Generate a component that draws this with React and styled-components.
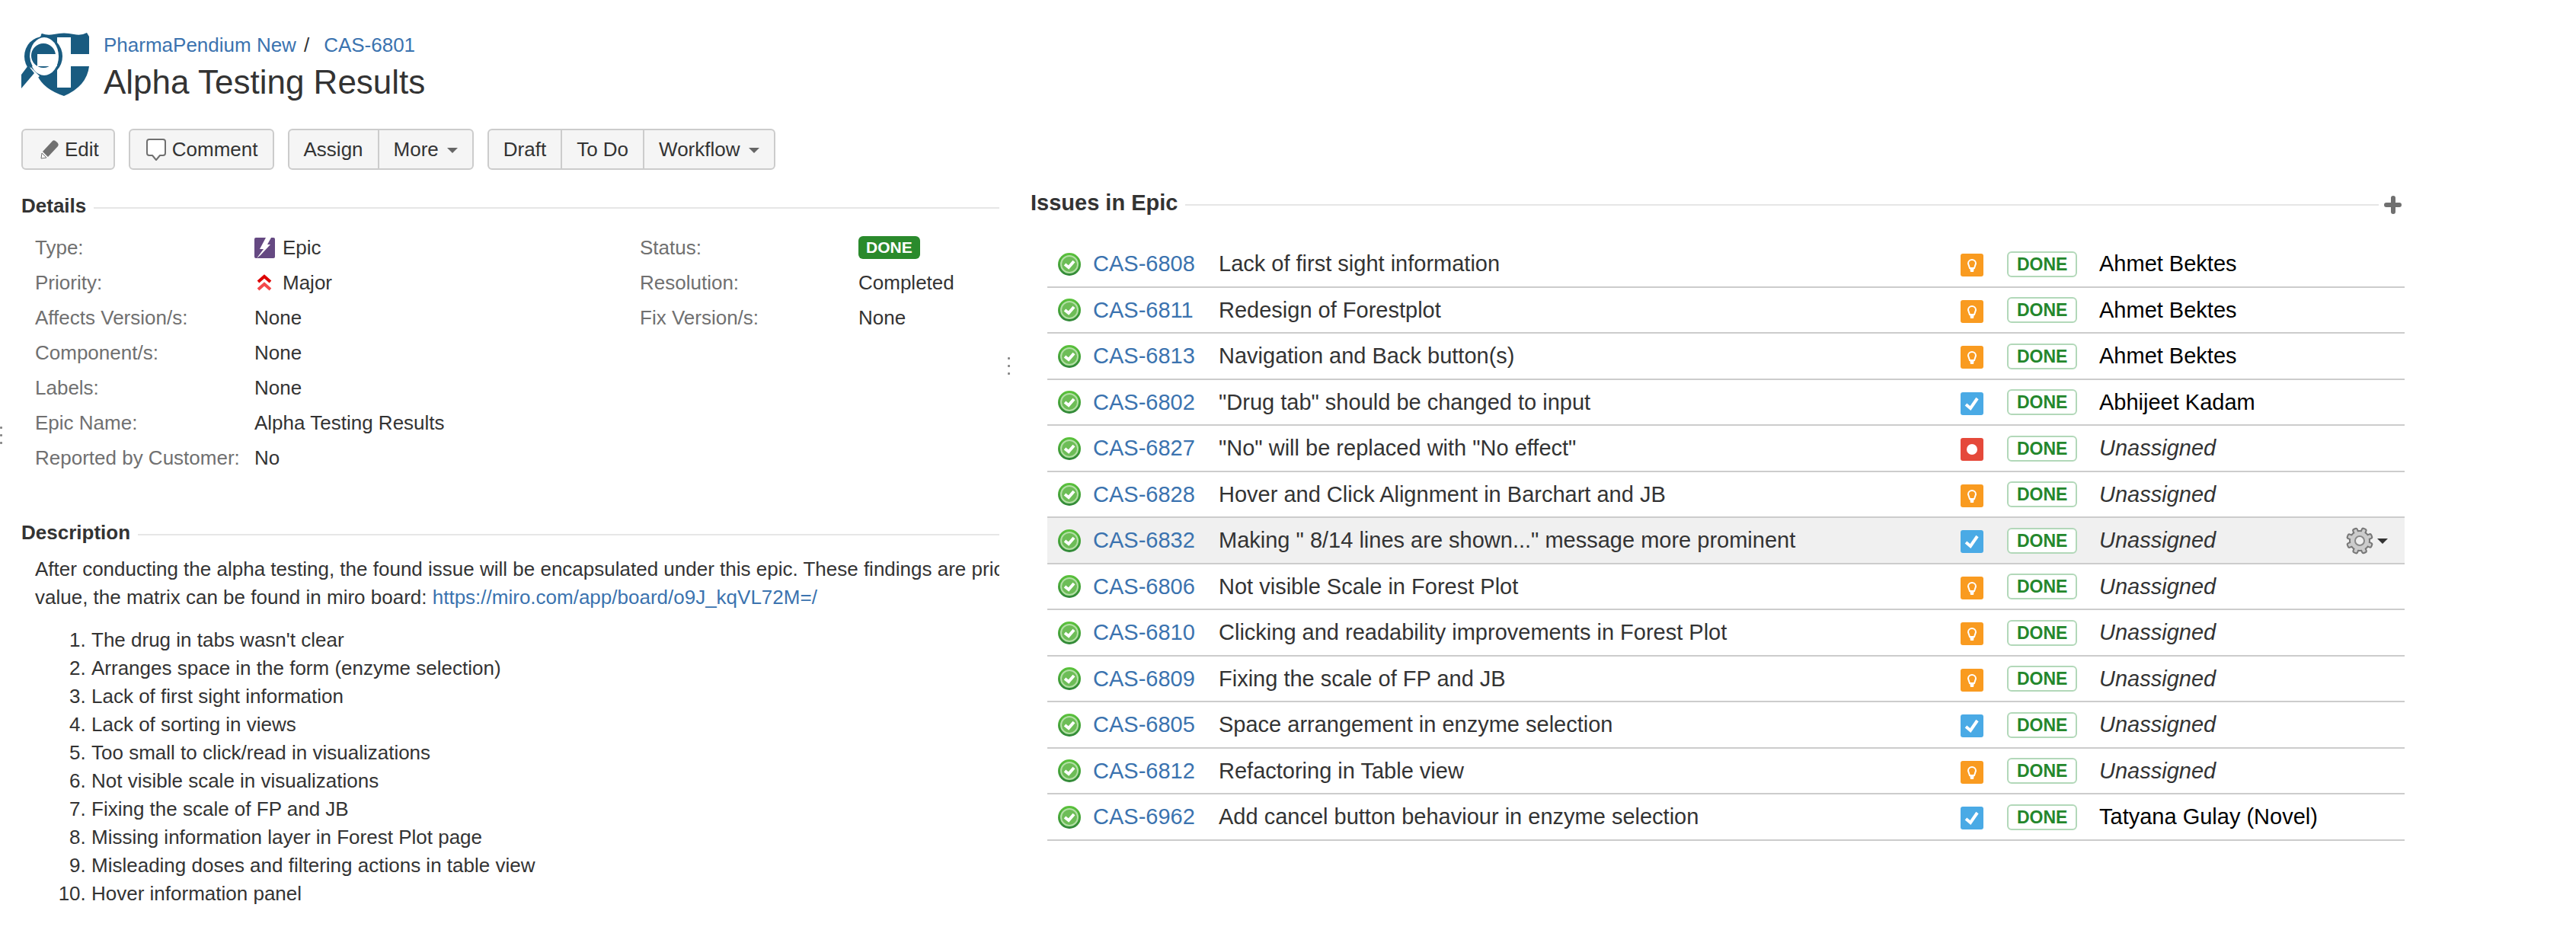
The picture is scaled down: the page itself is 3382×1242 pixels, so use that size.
import React from 'react';
import styled, { createGlobalStyle, css } from 'styled-components';

const GlobalStyle = createGlobalStyle`
  * {
    box-sizing: border-box;
  }

  body {
    margin: 0;
    background: #fff;
    color: #333;
    font-family: 'Liberation Sans', Arial, sans-serif;
    font-size: 26px;
    line-height: 37px;
  }

  svg {
    display: block;
    flex: none;
  }
`;

const Page = styled.div`
  display: flex;
  min-height: 100vh;
`;

const EdgeStrip = styled.div`
  flex: none;
  width: 28px;
  padding-top: 560px;
`;

const Content = styled.main`
  flex: 1;
  min-width: 0;
`;

const Header = styled.header`
  display: flex;
  gap: 19px;
  padding-top: 41px;
`;

const LogoBox = styled.div`
  padding-top: 2px;
`;

const Breadcrumb = styled.nav`
  display: flex;
  gap: 10px;
`;

const BreadcrumbSlash = styled.span`
  margin-right: 9px;
`;

const Link = styled.a`
  color: #3b73af;
  text-decoration: none;
`;

const Title = styled.h1`
  margin: 0;
  font-size: 44px;
  font-weight: 400;
  line-height: 60px;
`;

const Toolbar = styled.div`
  display: flex;
  flex-wrap: wrap;
  gap: 18px;
  margin: 31px 0 23px;
`;

const ButtonGroup = styled.div`
  display: flex;
`;

const ToolButton = styled.button`
  display: flex;
  align-items: center;
  gap: 6px;
  height: 54px;
  padding: 0 19px;
  border: 2px solid #ccc;
  background: #f5f5f5;
  color: #333;
  font: inherit;

  &:not(:first-child) {
    margin-left: -2px;
  }

  &:first-child {
    border-radius: 6px 0 0 6px;
  }

  &:last-child {
    border-radius: 0 6px 6px 0;
  }

  &:only-child {
    border-radius: 6px;
  }
`;

const Caret = styled.span`
  width: 0;
  height: 0;
  margin: 2px 0 0 5px;
  border: 7px solid transparent;
  border-top-color: ${({ $color }) => $color || '#666'};
  border-bottom: 0;
`;

const Columns = styled.div`
  display: grid;
  grid-template-columns: minmax(0, 642fr) 24px minmax(0, 1023fr);
`;

const LeftColumn = styled.div`
  padding-top: 6px;
  overflow: hidden;
`;

const RightColumn = styled.div`
  padding: 2px 225px 0 17px;
`;

const Splitter = styled.div`
  display: flex;
  justify-content: center;
  padding-top: 223px;
`;

const Dots = styled.div`
  display: grid;
  align-content: start;
  gap: 7px;
  width: 3px;
`;

const Dot = styled.span`
  width: 3px;
  height: 3px;
  border-radius: 1px;
  background: #888;
`;

const SectionHead = styled.div`
  display: flex;
  align-items: center;
  gap: 10px;

  &::after {
    content: '';
    order: 1;
    flex: 1;
    height: 2px;
    margin-top: 4px;
    background: #e6e6e6;
  }
`;

const SectionTitle = styled.h2`
  margin: 0;
  font-size: ${({ $large }) => ($large ? 29 : 26)}px;
  line-height: 37px;
`;

const AddButton = styled.button`
  order: 2;
  margin: 4px 4px 0 -3px;
  padding: 0;
  border: 0;
  background: none;
`;

const DetailsGrid = styled.div`
  display: grid;
  grid-template-columns: 794px 1fr;
  align-items: start;
  padding: 13px 0 0 18px;
`;

const FieldList = styled.dl`
  display: grid;
  grid-template-columns: ${({ $labelWidth }) => $labelWidth}px 1fr;
  margin: 0;
  line-height: 46px;
`;

const FieldLabel = styled.dt`
  color: #707070;
`;

const FieldValue = styled.dd`
  display: flex;
  align-items: center;
  gap: 10px;
  margin: 0;
`;

const Lozenge = styled.span`
  display: block;
  width: fit-content;
  padding: 0 10px;
  border-radius: 6px;
  background: #2a8a2c;
  color: #fff;
  font-size: 21px;
  font-weight: 700;
  line-height: 30px;

  ${({ $subtle }) =>
    $subtle &&
    css`
      padding: 0 11px;
      border: 2px solid #b2d8b9;
      background: #fff;
      color: #24872c;
      font-size: 23px;
    `}
`;

const DescriptionSection = styled.section`
  margin-top: 57px;
`;

const DescriptionText = styled.p`
  margin: 11px 0 19px;
  padding-left: 18px;
  white-space: nowrap;
`;

const FindingList = styled.ol`
  margin: 0;
  padding-left: 92px;
`;

const IssueTable = styled.table`
  width: calc(100% - 22px);
  margin: 32px 0 0 22px;
  border-collapse: separate;
  border-spacing: 0;
  table-layout: fixed;
  font-size: 29px;
`;

const IssueRow = styled.tr`
  height: 61px;
  background: ${({ $active }) => ($active ? '#f0f0f0' : 'transparent')};

  &:nth-child(even) {
    height: 60px;
  }
`;

const IssueCell = styled.td`
  padding: 0 0 0 ${({ $inset }) => $inset || 0}px;
  border-bottom: 2px solid #ccc;
  vertical-align: middle;
  white-space: nowrap;
`;

const Assignee = styled.span`
  color: #000;
`;

const Unassigned = styled.em`
  color: #333;
`;

const ActionsButton = styled.button`
  display: flex;
  align-items: center;
  padding: 0;
  border: 0;
  background: none;
`;

const ProjectLogo = () => (
  <svg width="89" height="83" viewBox="0 0 89 83" aria-hidden="true">
    <path
      d="M27 1 Q34 4 43 2 Q56 -1 69 2 Q79 4 86 0 L89 5 V44 Q86 70 56 83 Q29 74 21 56 L14 50 V14 Z"
      fill="#195b80"
    />
    <path d="M25 2 L21 9" stroke="#fff" strokeWidth="3" />
    <path d="M47 6 H65 V28 H89 V44 H65 V72 H47 Z" fill="#fff" />
    <ellipse cx="29" cy="31" rx="25" ry="26" fill="#195b80" />
    <path d="M11 44 L24 57 L19 61 L8 48 Z" fill="#fff" />
    <path d="M9 43 L17 53 L0 73 V55 Z" fill="#195b80" />
    <ellipse cx="30" cy="31" rx="19" ry="25" fill="#fff" />
    <ellipse cx="29" cy="30" rx="16" ry="16" fill="#195b80" />
    <path d="M12 15 Q5 31 13 45" fill="none" stroke="#195b80" strokeWidth="4" />
    <path d="M21 28 H47 V44 H21 Z" fill="#fff" />
  </svg>
);

const PencilIcon = () => (
  <svg width="30" height="30" viewBox="0 0 30 30" aria-hidden="true">
    <path
      d="M20 4 Q22 2 25 5 Q29 8 27 11 L14 25 L7 18 Z"
      fill="#707070"
    />
    <path d="M6 20 L12 26 L5 27 Z" fill="#fff" stroke="#707070" strokeLinejoin="round" />
  </svg>
);

const CommentIcon = () => (
  <svg width="30" height="30" viewBox="0 0 30 30" aria-hidden="true">
    <path
      d="M6 2 H24 Q27 2 27 5 V20 Q27 23 24 23 H20 L15 29 L10 23 H6 Q3 23 3 20 V5 Q3 2 6 2 Z"
      fill="#fff"
      stroke="#707070"
      strokeWidth="2"
      strokeLinejoin="round"
    />
  </svg>
);

const EpicIcon = () => (
  <svg width="27" height="27" viewBox="0 0 27 27" role="img" aria-label="Epic">
    <rect width="27" height="27" rx="2" fill="#654982" />
    <path d="M15 0 L22 0 L17 9 H21 L8 23 L3 27 L12 15 H7 Z" fill="#fff" />
  </svg>
);

const MajorIcon = () => (
  <svg width="27" height="27" viewBox="0 0 27 27" aria-hidden="true">
    <path d="M5 12 L13 5 L21 12" fill="none" stroke="#d00" strokeWidth="4" />
    <path d="M5 22 L13 15 L21 22" fill="none" stroke="#f3484b" strokeWidth="4" />
  </svg>
);

const PlusIcon = () => (
  <svg width="23" height="24" viewBox="0 0 23 24" aria-hidden="true">
    <path
      d="M12 3 V21 M3 12 H20"
      stroke="#707070"
      strokeWidth="6"
      strokeLinecap="round"
    />
  </svg>
);

const ResolvedIcon = () => (
  <svg width="30" height="30" viewBox="0 0 30 30" role="img" aria-label="Resolved">
    <defs>
      <linearGradient id="resolved-rim" x1="0" y1="0" x2="0" y2="1">
        <stop offset="0" stopColor="#5cc43c" />
        <stop offset="1" stopColor="#2f8637" />
      </linearGradient>
    </defs>
    <circle cx="15" cy="15" r="15" fill="url(#resolved-rim)" />
    <circle cx="15" cy="15" r="11" fill="#6dbd57" stroke="#b3dfa5" strokeWidth="2" />
    <path d="M9 15 L14 19 L21 11" fill="none" stroke="#fff" strokeWidth="4" />
  </svg>
);

const TypeSvg = styled.svg`
  margin-top: 3px;
`;

const issueTypes = {
  improvement: {
    label: 'Improvement',
    color: '#f99b20',
    glyph: (
      <>
        <path
          d="M12 19 L10 13 A5 5 0 1 1 20 13 L18 19 Z"
          fill="none"
          stroke="#fff"
          strokeWidth="2"
        />
        <path d="M12 18 H18 L17 24 H13 Z" fill="#fff" />
      </>
    ),
  },
  task: {
    label: 'Task',
    color: '#4aaae5',
    glyph: (
      <path d="M7 16 L13 21 L22 8" fill="none" stroke="#fff" strokeWidth="4" />
    ),
  },
  bug: {
    label: 'Bug',
    color: '#e5493a',
    glyph: <circle cx="15" cy="15" r="7" fill="#fff" />,
  },
};

const IssueTypeIcon = ({ type }) => {
  const { label, color, glyph } = issueTypes[type];
  return (
    <TypeSvg width="30" height="30" viewBox="0 0 30 30" role="img" aria-label={label}>
      <rect width="30" height="30" rx="3" fill={color} />
      {glyph}
    </TypeSvg>
  );
};

const teeth = [0, 45, 90, 135, 180, 225, 270, 315];

const GearIcon = () => (
  <svg width="36" height="36" viewBox="0 0 36 36" aria-hidden="true">
    <g fill="#777">
      {teeth.map(angle => (
        <rect
          key={angle}
          x="14"
          y="0"
          width="8"
          height="10"
          rx="3"
          transform={`rotate(${angle + 22} 18 18)`}
        />
      ))}
      <circle cx="18" cy="18" r="14" />
    </g>
    <g fill="#ccc">
      {teeth.map(angle => (
        <rect
          key={angle}
          x="16"
          y="2"
          width="4"
          height="10"
          rx="1"
          transform={`rotate(${angle + 22} 18 18)`}
        />
      ))}
      <circle cx="18" cy="18" r="12" />
    </g>
    <circle cx="18" cy="18" r="6" fill="#f0f0f0" stroke="#888" strokeWidth="2" />
  </svg>
);

const Handle = () => (
  <Dots>
    <Dot />
    <Dot />
    <Dot />
  </Dots>
);

const issues = [
  ['CAS-6808', 'Lack of first sight information', 'improvement', 'Ahmet Bektes'],
  ['CAS-6811', 'Redesign of Forestplot', 'improvement', 'Ahmet Bektes'],
  ['CAS-6813', 'Navigation and Back button(s)', 'improvement', 'Ahmet Bektes'],
  ['CAS-6802', '"Drug tab" should be changed to input', 'task', 'Abhijeet Kadam'],
  ['CAS-6827', '"No" will be replaced with "No effect"', 'bug'],
  ['CAS-6828', 'Hover and Click Alignment in Barchart and JB', 'improvement'],
  ['CAS-6832', 'Making " 8/14 lines are shown..." message more prominent', 'task'],
  ['CAS-6806', 'Not visible Scale in Forest Plot', 'improvement'],
  ['CAS-6810', 'Clicking and readability improvements in Forest Plot', 'improvement'],
  ['CAS-6809', 'Fixing the scale of FP and JB', 'improvement'],
  ['CAS-6805', 'Space arrangement in enzyme selection', 'task'],
  ['CAS-6812', 'Refactoring in Table view', 'improvement'],
  [
    'CAS-6962',
    'Add cancel button behaviour in enzyme selection',
    'task',
    'Tatyana Gulay (Novel)',
  ],
];

const findings = [
  "The drug in tabs wasn't clear",
  'Arranges space in the form (enzyme selection)',
  'Lack of first sight information',
  'Lack of sorting in views',
  'Too small to click/read in visualizations',
  'Not visible scale in visualizations',
  'Fixing the scale of FP and JB',
  'Missing information layer in Forest Plot page',
  'Misleading doses and filtering actions in table view',
  'Hover information panel',
];

const details = [
  ['Type:', 'Epic', <EpicIcon />],
  ['Priority:', 'Major', <MajorIcon />],
  ['Affects Version/s:', 'None'],
  ['Component/s:', 'None'],
  ['Labels:', 'None'],
  ['Epic Name:', 'Alpha Testing Results'],
  ['Reported by Customer:', 'No'],
];

const statusDetails = [
  ['Status:', <Lozenge>DONE</Lozenge>],
  ['Resolution:', 'Completed'],
  ['Fix Version/s:', 'None'],
];

const Fields = ({ items, labelWidth }) => (
  <FieldList $labelWidth={labelWidth}>
    {items.map(([label, value, icon]) => (
      <React.Fragment key={label}>
        <FieldLabel>{label}</FieldLabel>
        <FieldValue>
          {icon}
          {value}
        </FieldValue>
      </React.Fragment>
    ))}
  </FieldList>
);

const Issue = ({ id, summary, type, assignee, active }) => (
  <IssueRow $active={active}>
    <IssueCell $inset={14}>
      <ResolvedIcon />
    </IssueCell>
    <IssueCell>
      <Link href={`#${id}`}>{id}</Link>
    </IssueCell>
    <IssueCell>{summary}</IssueCell>
    <IssueCell>
      <IssueTypeIcon type={type} />
    </IssueCell>
    <IssueCell>
      <Lozenge $subtle>DONE</Lozenge>
    </IssueCell>
    <IssueCell>
      {assignee ? (
        <Assignee>{assignee}</Assignee>
      ) : (
        <Unassigned>Unassigned</Unassigned>
      )}
    </IssueCell>
    <IssueCell>
      {active && (
        <ActionsButton type="button" aria-label="Actions">
          <GearIcon />
          <Caret $color="#333" />
        </ActionsButton>
      )}
    </IssueCell>
  </IssueRow>
);

const App = () => (
  <>
    <GlobalStyle />
    <Page>
      <EdgeStrip>
        <Handle />
      </EdgeStrip>
      <Content>
        <Header>
          <LogoBox>
            <ProjectLogo />
          </LogoBox>
          <div>
            <Breadcrumb aria-label="Breadcrumb">
              <Link href="#project">PharmaPendium New</Link>
              <BreadcrumbSlash>/</BreadcrumbSlash>
              <Link href="#CAS-6801">CAS-6801</Link>
            </Breadcrumb>
            <Title>Alpha Testing Results</Title>
          </div>
        </Header>
        <Toolbar>
          <ButtonGroup>
            <ToolButton type="button">
              <PencilIcon />
              Edit
            </ToolButton>
          </ButtonGroup>
          <ButtonGroup>
            <ToolButton type="button">
              <CommentIcon />
              Comment
            </ToolButton>
          </ButtonGroup>
          <ButtonGroup>
            <ToolButton type="button">Assign</ToolButton>
            <ToolButton type="button">
              More
              <Caret />
            </ToolButton>
          </ButtonGroup>
          <ButtonGroup>
            <ToolButton type="button">Draft</ToolButton>
            <ToolButton type="button">To Do</ToolButton>
            <ToolButton type="button">
              Workflow
              <Caret />
            </ToolButton>
          </ButtonGroup>
        </Toolbar>
        <Columns>
          <LeftColumn>
            <section>
              <SectionHead>
                <SectionTitle>Details</SectionTitle>
              </SectionHead>
              <DetailsGrid>
                <Fields items={details} labelWidth={288} />
                <Fields items={statusDetails} labelWidth={287} />
              </DetailsGrid>
            </section>
            <DescriptionSection>
              <SectionHead>
                <SectionTitle>Description</SectionTitle>
              </SectionHead>
              <DescriptionText>
                After conducting the alpha testing, the found issue will be
                encapsulated under this epic. These findings are prioritized
                <br />
                value, the matrix can be found in miro board:{' '}
                <Link href="https://miro.com/app/board/o9J_kqVL72M=/">
                  https://miro.com/app/board/o9J_kqVL72M=/
                </Link>
              </DescriptionText>
              <FindingList>
                {findings.map(finding => (
                  <li key={finding}>{finding}</li>
                ))}
              </FindingList>
            </DescriptionSection>
          </LeftColumn>
          <Splitter>
            <Handle />
          </Splitter>
          <RightColumn>
            <SectionHead>
              <SectionTitle $large>Issues in Epic</SectionTitle>
              <AddButton type="button" aria-label="Create issue in epic">
                <PlusIcon />
              </AddButton>
            </SectionHead>
            <IssueTable aria-label="Issues in Epic">
              <colgroup>
                <col width="60" />
                <col width="165" />
                <col />
                <col width="61" />
                <col width="121" />
                <col width="324" />
                <col width="77" />
              </colgroup>
              <tbody>
                {issues.map(([id, summary, type, assignee]) => (
                  <Issue
                    key={id}
                    active={id === 'CAS-6832'}
                    {...{ id, summary, type, assignee }}
                  />
                ))}
              </tbody>
            </IssueTable>
          </RightColumn>
        </Columns>
      </Content>
    </Page>
  </>
);

export default App;
